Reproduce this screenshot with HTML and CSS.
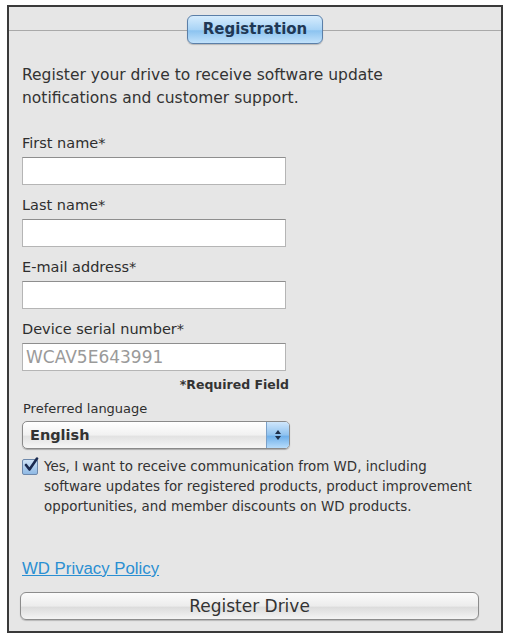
FILE: index.html
```html
<!DOCTYPE html>
<html lang="en">
<head>
    <meta charset="UTF-8">
    <meta name="viewport" content="width=device-width, initial-scale=1.0">
    <title>Registration</title>
    <link rel="stylesheet" href="styles.css">
</head>
<body>
    <div class="panel">
        <div class="tab-bar">
            <span class="tab">Registration</span>
        </div>

        <p class="intro">Register your drive to receive software update notifications and customer support.</p>

        <form class="reg-form">
            <label class="field-label first" for="first_name">First name*</label>
            <input class="text-input" type="text" id="first_name">

            <label class="field-label" for="last_name">Last name*</label>
            <input class="text-input" type="text" id="last_name">

            <label class="field-label" for="email">E-mail address*</label>
            <input class="text-input" type="email" id="email">

            <label class="field-label" for="serial">Device serial number*</label>
            <input class="text-input serial" type="text" id="serial" value="WCAV5E643991" readonly>

            <div class="required-note">*Required Field</div>

            <label class="lang-label" for="language">Preferred language</label>
            <div class="select-box">
                <span class="select-value">English</span>
                <span class="select-arrows">
                    <svg width="8" height="12" viewBox="0 0 8 12">
                        <path d="M4 1 L7 5 L1 5 Z" fill="#1d2f4a"/>
                        <path d="M4 11 L7 7 L1 7 Z" fill="#1d2f4a"/>
                    </svg>
                </span>
            </div>

            <label class="opt-in">
                <span class="check">
                    <svg width="16" height="16" viewBox="0 0 16 16">
                        <path d="M3 8 L6.5 12.5 L14 1.5" fill="none" stroke="#1a2a50" stroke-width="2.6" stroke-linecap="round" stroke-linejoin="round"/>
                    </svg>
                </span>
                <span class="opt-text">Yes, I want to receive communication from WD, including software updates for registered products, product improvement opportunities, and member discounts on WD products.</span>
            </label>

            <a class="privacy" href="#">WD Privacy Policy</a>

            <button type="button" class="register-btn">Register Drive</button>
        </form>
    </div>
</body>
</html>
```

FILE: styles.css
```css
/* General */
body {
    margin: 0;
    padding: 5px 6px 4px 7px;
    background-color: #ffffff;
    font-family: 'DejaVu Sans', 'Liberation Sans', sans-serif;
    color: #333;
}

/* Panel */
.panel {
    background-color: #e6e6e6;
    border: 2px solid #3a3a3a;
    height: 628px;
    box-sizing: border-box;
    padding: 0 13px 0 13px;
}

/* Tab header */
.tab-bar {
    position: relative;
    display: flex;
    justify-content: center;
    padding-top: 8px;
    margin: 0 -13px;
}

.tab-bar::before {
    content: "";
    position: absolute;
    left: 0;
    right: 0;
    top: 23px;
    border-top: 1px solid #a9a9a9;
}

.tab {
    position: relative;
    width: 136px;
    height: 29px;
    box-sizing: border-box;
    line-height: 26px;
    text-align: center;
    font-size: 15px;
    font-weight: bold;
    color: #1f3855;
    border: 1px solid #5b7fa8;
    border-radius: 6px;
    background: linear-gradient(#d6ecfd, #a9d4f6 50%, #8cc3f0 55%, #c2e2fb);
    box-shadow: 0 1px 1px rgba(0, 0, 0, 0.2);
}

/* Intro text */
.intro {
    margin: 20px 0 0 0;
    width: 420px;
    font-size: 15.5px;
    line-height: 23px;
    color: #333;
}

/* Form */
.reg-form {
    display: flex;
    flex-direction: column;
    align-items: flex-start;
}

.field-label {
    font-size: 14.5px;
    color: #2e2e2e;
    margin-top: 12px;
    margin-bottom: 6px;
}

.field-label.first {
    margin-top: 25px;
}

.text-input {
    width: 264px;
    height: 28px;
    box-sizing: border-box;
    border: 1px solid #b5b5b5;
    border-top-color: #8e8e8e;
    background: #fff;
    margin: 0;
    padding: 0 3px;
    font-family: inherit;
    font-size: 16px;
}

.serial {
    color: #9a9a9a;
    font-size: 17px;
    outline: none;
}

.required-note {
    width: 267px;
    text-align: right;
    font-size: 12.5px;
    font-weight: bold;
    color: #333;
    margin-top: 6px;
}

.lang-label {
    margin-top: 9px;
    margin-bottom: 5px;
    margin-left: 1px;
    font-size: 13px;
    color: #2e2e2e;
}

/* Language select */
.select-box {
    display: flex;
    align-items: stretch;
    width: 268px;
    height: 28px;
    box-sizing: border-box;
    border: 1px solid #8a8a8a;
    border-radius: 5px;
    background: linear-gradient(#ffffff, #f1f1f1 50%, #e2e2e2 55%, #f6f6f6);
    box-shadow: 0 1px 1px rgba(0, 0, 0, 0.25);
    overflow: hidden;
}

.select-value {
    flex: 1;
    padding-left: 7px;
    line-height: 26px;
    font-size: 14.5px;
    font-weight: bold;
    color: #333;
}

.select-arrows {
    width: 22px;
    display: flex;
    align-items: center;
    justify-content: center;
    background: linear-gradient(#cfe6fb, #8fc2ef 50%, #6fb0ea 55%, #b7dcfb);
    border-left: 1px solid #7aa0c8;
}

/* Opt-in checkbox */
.opt-in {
    display: flex;
    gap: 6px;
    margin-top: 8px;
    font-size: 13.4px;
    line-height: 20px;
    color: #333;
}

.opt-text {
    width: 440px;
}

.check {
    flex: none;
    width: 14px;
    height: 14px;
    margin-top: 2px;
    border: 1px solid #6d88ab;
    border-radius: 2px;
    background: linear-gradient(#cfe3f7, #8fb9e4);
    position: relative;
}

.check svg {
    position: absolute;
    left: 0;
    top: -3px;
}

/* Links */
.privacy {
    margin-top: 42px;
    font-family: 'Liberation Sans', Arial, sans-serif;
    font-size: 16.8px;
    color: #2a8fd2;
    text-decoration: underline;
}

/* Register button */
.register-btn {
    margin-top: 13px;
    margin-left: -2px;
    width: 459px;
    height: 28px;
    border: 1px solid #8c8c8c;
    border-radius: 6px;
    background: linear-gradient(#fbfbfb, #ececec 50%, #dcdcdc 55%, #f4f4f4);
    box-shadow: 0 1px 1px rgba(0, 0, 0, 0.2);
    font-family: inherit;
    font-size: 17px;
    color: #333;
    cursor: pointer;
}
```
